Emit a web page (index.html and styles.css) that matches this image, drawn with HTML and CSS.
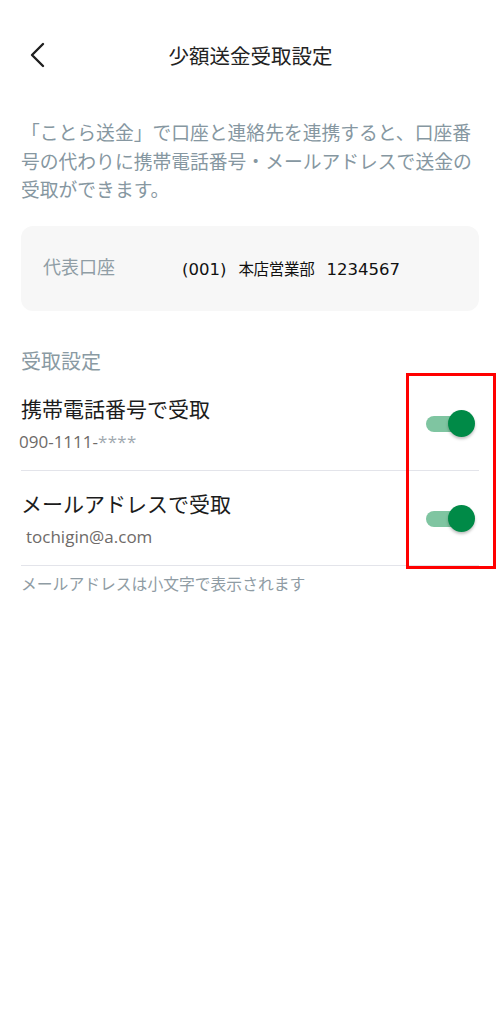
FILE: index.html
```html
<!DOCTYPE html>
<html lang="ja">
<head>
    <meta charset="UTF-8">
    <meta name="viewport" content="width=device-width, initial-scale=1.0">
    <title>少額送金受取設定</title>
    <link rel="stylesheet" href="styles.css">
</head>
<body>
    <div class="page">
        <header class="topbar">
            <button class="back" aria-label="戻る">
                <svg width="16" height="26" viewBox="0 0 16 26">
                    <path d="M14 2 L3 13 L14 24" fill="none" stroke="#1f1f1f" stroke-width="2.4" stroke-linecap="round" stroke-linejoin="round"/>
                </svg>
            </button>
            <h1>少額送金受取設定</h1>
        </header>

        <p class="intro">「ことら送金」で口座と連絡先を連携すると、口座番号の代わりに携帯電話番号・メールアドレスで送金の受取ができます。</p>

        <div class="account">
            <span class="account-label">代表口座</span>
            <span class="account-value"><span class="num">(001)</span> <span class="branch">本店営業部</span> <span class="num">1234567</span></span>
        </div>

        <h2 class="section">受取設定</h2>

        <div class="settings">
            <div class="row">
                <div class="row-text">
                    <div class="row-title">携帯電話番号で受取</div>
                    <div class="row-sub phone">090-1111-<span class="mask">****</span></div>
                </div>
                <div class="toggle on"><span class="knob"></span></div>
            </div>
            <div class="row">
                <div class="row-text">
                    <div class="row-title">メールアドレスで受取</div>
                    <div class="row-sub mail">tochigin@a.com</div>
                </div>
                <div class="toggle on"><span class="knob"></span></div>
            </div>
            <div class="highlight"></div>
        </div>

        <p class="note">メールアドレスは小文字で表示されます</p>
    </div>
</body>
</html>
```

FILE: styles.css
```css
body {
    margin: 0;
    background: #fff;
    font-family: "Noto Sans CJK JP", "Noto Sans", sans-serif;
    color: #1f1f1f;
}

.page {
    width: 500px;
    padding: 0 21px;
    box-sizing: border-box;
}

.topbar {
    position: relative;
    height: 110px;
    display: flex;
    align-items: center;
    justify-content: center;
}

.back {
    position: absolute;
    left: 8px;
    top: 42px;
    background: none;
    border: none;
    padding: 0;
    cursor: pointer;
}

.back svg {
    display: block;
}

.topbar h1 {
    margin: 0 0 0 1px;
    padding-bottom: 1px;
    font-size: 20.5px;
    font-weight: 400;
    color: #222;
}

.intro {
    margin: 8px 0 0;
    font-size: 18.8px;
    line-height: 28.5px;
    color: #8697a1;
}

.account {
    margin-top: 22px;
    height: 85px;
    background: #f7f7f7;
    border-radius: 12px;
    display: flex;
    align-items: center;
    padding: 0 22px;
}

.account-label {
    width: 139px;
    font-size: 18px;
    color: #8f9da5;
    margin-top: -4px;
}

.account-value {
    display: flex;
    align-items: baseline;
    gap: 12px;
    color: #111;
}

.account-value .num {
    font-family: "DejaVu Sans", "Noto Sans", sans-serif;
    font-size: 16.5px;
}

.account-value .branch {
    font-size: 15.5px;
    letter-spacing: -0.3px;
}

.section {
    margin: 35px 0 0;
    font-size: 20px;
    font-weight: 400;
    line-height: 30px;
    color: #8a9aa3;
}

.settings {
    position: relative;
}

.row {
    display: flex;
    align-items: flex-start;
    justify-content: space-between;
    padding: 17px 0 16px;
    border-bottom: 1.5px solid #e3e4ea;
}

.row-title {
    font-size: 21px;
    line-height: 30px;
    color: #1c1c1c;
}

.row-sub {
    margin-top: 7px;
    font-family: "Open Sans", "Noto Sans", sans-serif;
    font-size: 17px;
    line-height: 24px;
    color: #6e6a68;
}

.row-sub.phone {
    margin-left: -2px;
}

.row-sub.mail {
    margin-left: 5px;
}

.mask {
    color: #a1a9af;
    letter-spacing: 0.3px;
}

.toggle {
    position: relative;
    width: 34px;
    height: 16px;
    border-radius: 8px;
    background: #7fc5a1;
    margin: 23px 19px 0 0;
}

.toggle .knob {
    position: absolute;
    top: -5.5px;
    right: -15px;
    width: 27px;
    height: 27px;
    border-radius: 50%;
    background: #008a47;
    box-shadow: 0 2px 3px rgba(0, 0, 0, 0.25);
}

.highlight {
    position: absolute;
    left: 385px;
    top: -3px;
    width: 84px;
    height: 190px;
    border: 3px solid #ff0000;
}

.note {
    margin: 7.5px 0 0;
    font-size: 15.8px;
    line-height: 22px;
    color: #8f9ca4;
}
```
